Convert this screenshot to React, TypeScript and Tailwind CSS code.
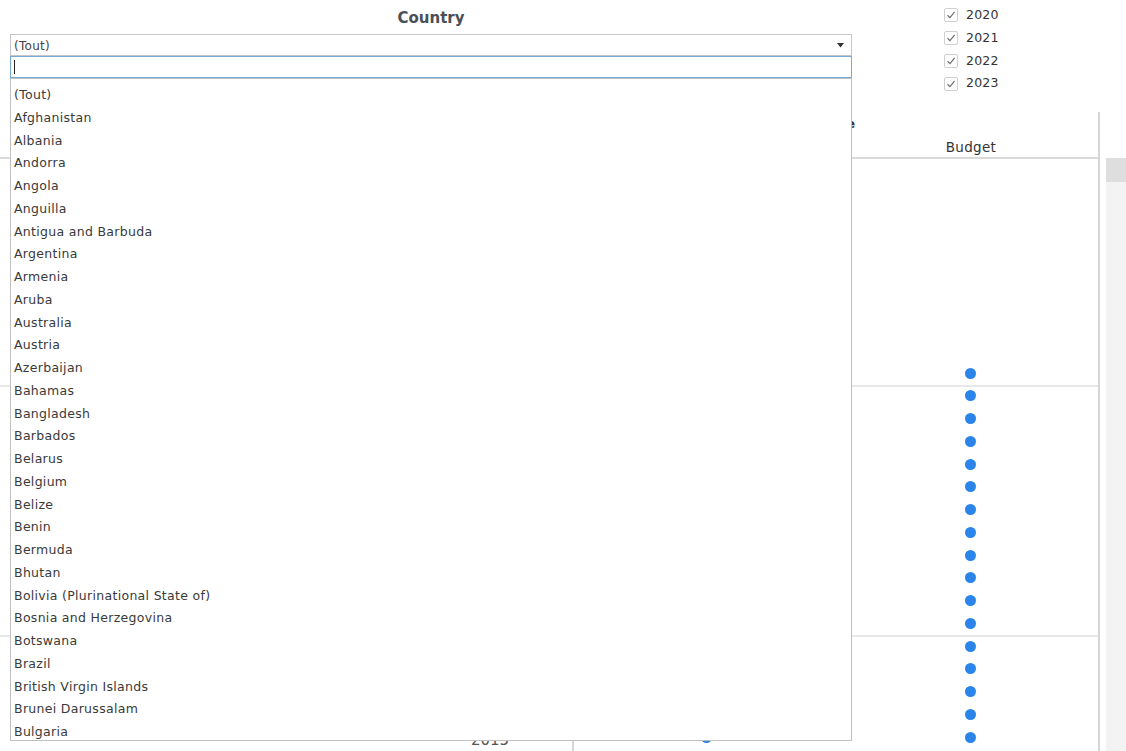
import React from 'react'

const countries = [
  '(Tout)',
  'Afghanistan',
  'Albania',
  'Andorra',
  'Angola',
  'Anguilla',
  'Antigua and Barbuda',
  'Argentina',
  'Armenia',
  'Aruba',
  'Australia',
  'Austria',
  'Azerbaijan',
  'Bahamas',
  'Bangladesh',
  'Barbados',
  'Belarus',
  'Belgium',
  'Belize',
  'Benin',
  'Bermuda',
  'Bhutan',
  'Bolivia (Plurinational State of)',
  'Bosnia and Herzegovina',
  'Botswana',
  'Brazil',
  'British Virgin Islands',
  'Brunei Darussalam',
  'Bulgaria'
]

const years = ['2020', '2021', '2022', '2023']

// row groups of the table behind the filter, one entry per year row
const groups: { label: string; years: string[] }[] = [
  { label: 'A', years: ['2014', '2015', '2016', '2017', '2018', '2019', '2020', '2021', '2022', '2023'] },
  { label: 'B', years: ['2013', '2014', '2015', '2016', '2017', '2018', '2019', '2020', '2021', '2022', '2023'] },
  { label: 'C', years: ['2011', '2012', '2013', '2014', '2015', '2016'] }
]

const font = { fontFamily: '"DejaVu Sans", Verdana, sans-serif' }

const Dot: React.FC = () => (
  <span className="block w-[11px] h-[11px] rounded-full bg-[#2a84ea]" />
)

const Check: React.FC = () => (
  <span className="flex items-center justify-center w-[14px] h-[14px] border border-[#d0d0d0] rounded-[2px] bg-white">
    <svg width="10" height="10" viewBox="0 0 10 10" fill="none">
      <path d="M1.5 5.2 L4 7.6 L8.6 1.8" stroke="#6f6f6f" strokeWidth="1.2" />
    </svg>
  </span>
)

const CountryFilter: React.FC = () => (
  <div className="w-[852px] pl-[10px] pt-[8px]">
    <div className="text-center text-[15px] font-bold text-[#4a4f57] leading-[20px] h-[26px]">
      Country
    </div>
    <div className="relative">
      <div className="h-[22px] border border-[#c6c6c6] flex items-center justify-between pl-[3px] pr-[7px] pt-[1px] text-[12px] tracking-[0.3px] text-[#444]">
        <span>(Tout)</span>
        <svg width="7" height="5" viewBox="0 0 7 5">
          <path d="M0 0 H7 L3.5 4.5 Z" fill="#333" />
        </svg>
      </div>
      <div className="absolute left-0 top-full w-full z-10 bg-white">
        <div className="h-[22px] border border-[#7aa9d9] flex items-center pl-[3px]">
          <span className="block w-[1px] h-[14px] bg-[#222]" />
        </div>
        <div className="h-[663px] border border-[#c0c0c0] overflow-hidden pt-[5px]">
          {countries.map((c) => (
            <div key={c} className="h-[22.75px] flex items-center pl-[3px] text-[12.5px] tracking-[0.3px] text-[#3a3a3a] whitespace-nowrap">
              {c}
            </div>
          ))}
        </div>
      </div>
    </div>
  </div>
)

const YearChecks: React.FC = () => (
  <div className="ml-[92px] pt-[4px]">
    {years.map((y) => (
      <div key={y} className="h-[22.75px] flex items-center gap-[8px] text-[12.5px] tracking-[0.2px] text-[#333]">
        <Check />
        <span>{y}</span>
      </div>
    ))}
  </div>
)

const App: React.FC = () => {
  let row = 0
  return (
    <div className="relative w-[1126px] h-[751px] overflow-hidden bg-white" style={font}>
      <div className="flex h-[112px] relative z-10">
        <CountryFilter />
        <YearChecks />
      </div>

      <div className="flex">
        <div className="w-[1100px] border-r-2 border-[#d6d6d6]">
          {/* headers */}
          <div className="h-[45px] flex shadow-[0_2px_0_0_#d9d9d9]">
            <div className="w-[574px]" />
            <div className="flex-1 flex flex-col">
              <div className="h-[29px] flex items-end justify-center text-[13px] font-bold text-[#333] pl-[4px]">
                Type
              </div>
              <div className="flex-1 flex">
                <div className="w-[264px] flex items-center justify-center text-[13px] text-[#333]">Actual</div>
                <div className="flex-1 flex items-center justify-center text-[13.5px] tracking-[0.3px] text-[#333] pl-[6px] pt-[3px]">
                  Budget
                </div>
              </div>
            </div>
          </div>

          {/* body */}
          {groups.map((g) => (
            <div key={g.label} className="relative shadow-[0_2px_0_0_#e8e8e8]">
              {g.years.map((y) => {
                const i = row++
                return (
                  <div key={y} className="h-[22.75px] flex">
                    <div className="w-[574px] flex border-r-2 border-[#d6d6d6]">
                      <div className="w-[410px]" />
                      <div className="flex-1 flex items-center justify-center text-[15px] text-[#555] pr-[2px] pt-[7px]">
                        {y}
                      </div>
                    </div>
                    <div className="w-[264px] flex items-center justify-center">
                      {i >= 9 && <Dot />}
                    </div>
                    <div className="flex-1 flex items-center justify-center pl-[5px]">
                      {i >= 9 && <Dot />}
                    </div>
                  </div>
                )
              })}
            </div>
          ))}
        </div>

        <div className="ml-[6px] flex-1 pt-[46px]">
          <div className="h-full bg-[#f3f3f3]">
            <div className="h-[24px] bg-[#dedede]" />
          </div>
        </div>
      </div>
    </div>
  )
}

export default App
